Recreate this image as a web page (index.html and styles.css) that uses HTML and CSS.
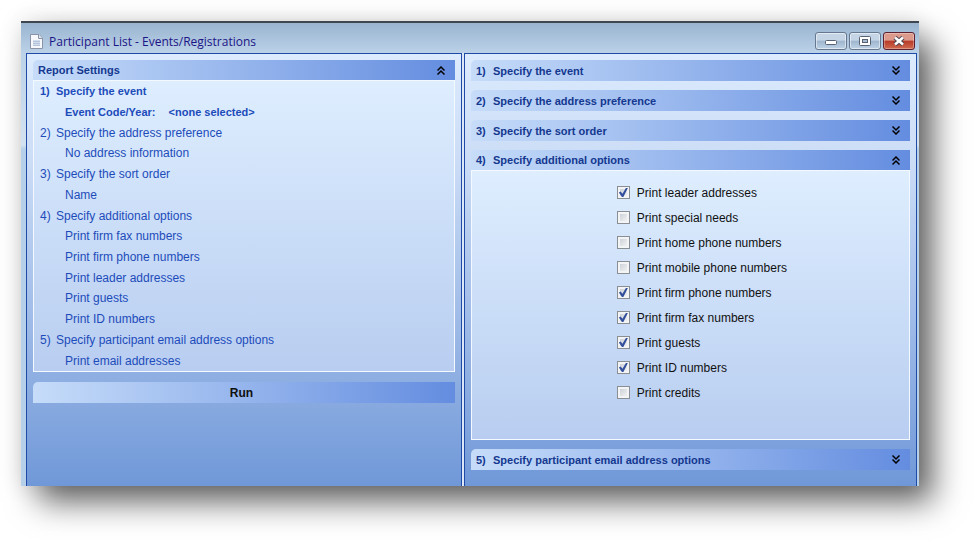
FILE: index.html
```html
<!DOCTYPE html>
<html lang="en">
<head>
    <meta charset="UTF-8">
    <meta name="viewport" content="width=device-width, initial-scale=1.0">
    <title>Participant List - Events/Registrations</title>
    <link rel="stylesheet" href="styles.css">
</head>
<body>
    <svg class="symbols" aria-hidden="true">
        <symbol id="down" viewBox="0 0 8 9">
            <path d="M0.5 0.5 L4 4 L7.5 0.5 M0.5 4.5 L4 8 L7.5 4.5" fill="none" stroke="#000" stroke-width="1.5"/>
        </symbol>
        <symbol id="up" viewBox="0 0 8 9">
            <path d="M0.5 4.5 L4 1 L7.5 4.5 M0.5 8.5 L4 5 L7.5 8.5" fill="none" stroke="#000" stroke-width="1.5"/>
        </symbol>
    </svg>

    <div class="window">
        <div class="titlebar">
            <svg width="13" height="15" viewBox="0 0 13 15" aria-hidden="true">
                <path d="M0.5 0.5 H9 L12.5 4 V14.5 H0.5 Z" fill="#f6f8fb" stroke="#8a93a8"/>
                <path d="M8.5 0.5 V4.5 H12.5" fill="#dde3ec" stroke="#8a93a8"/>
                <path d="M3 6 H10 V12 H3 Z" fill="#d3deee"/>
                <path d="M3 7.5 H10 M3 9.5 H10 M3 11.5 H10" stroke="#b4c3da"/>
            </svg>
            <h1>Participant List - Events/Registrations</h1>
            <div class="window-buttons">
                <button type="button" aria-label="Minimize">
                    <svg width="12" height="10" viewBox="0 0 12 10"><rect x="0.5" y="4.5" width="11" height="4" rx="1" fill="#fff" stroke="#566173"/></svg>
                </button>
                <button type="button" aria-label="Maximize">
                    <svg width="12" height="10" viewBox="0 0 12 10"><rect x="0.5" y="0.5" width="11" height="9" rx="1" fill="#fff" stroke="#566173"/><rect x="3.5" y="3.5" width="5" height="3" fill="#a9bbd0" stroke="#566173"/></svg>
                </button>
                <button type="button" class="close" aria-label="Close">
                    <svg width="12" height="10" viewBox="0 0 12 10"><path d="M2 1.5 L10 8.5 M10 1.5 L2 8.5" stroke="#4d4550" stroke-width="4.5"/><path d="M2 1.5 L10 8.5 M10 1.5 L2 8.5" stroke="#fff" stroke-width="2.5"/></svg>
                </button>
            </div>
        </div>

        <div class="panes">
            <div class="pane">
                <button type="button" class="bar open">Report Settings <svg class="chevron"><use href="#up"/></svg></button>
                <div class="box">
                    <ul class="summary">
                        <li class="current"><span class="num">1)</span>Specify the event</li>
                        <li class="value current">Event Code/Year: <span class="none">&lt;none selected&gt;</span></li>
                        <li><span class="num">2)</span>Specify the address preference</li>
                        <li class="value">No address information</li>
                        <li><span class="num">3)</span>Specify the sort order</li>
                        <li class="value">Name</li>
                        <li><span class="num">4)</span>Specify additional options</li>
                        <li class="value">Print firm fax numbers</li>
                        <li class="value">Print firm phone numbers</li>
                        <li class="value">Print leader addresses</li>
                        <li class="value">Print guests</li>
                        <li class="value">Print ID numbers</li>
                        <li><span class="num">5)</span>Specify participant email address options</li>
                        <li class="value">Print email addresses</li>
                    </ul>
                </div>
                <button type="button" class="bar run">Run</button>
            </div>

            <div class="pane steps">
                <button type="button" class="bar"><span class="num">1)</span>Specify the event <svg class="chevron"><use href="#down"/></svg></button>
                <button type="button" class="bar"><span class="num">2)</span>Specify the address preference <svg class="chevron"><use href="#down"/></svg></button>
                <button type="button" class="bar"><span class="num">3)</span>Specify the sort order <svg class="chevron"><use href="#down"/></svg></button>
                <div>
                    <button type="button" class="bar open"><span class="num">4)</span>Specify additional options <svg class="chevron"><use href="#up"/></svg></button>
                    <form class="box options">
                        <label><input type="checkbox" checked> Print leader addresses</label>
                        <label><input type="checkbox"> Print special needs</label>
                        <label><input type="checkbox"> Print home phone numbers</label>
                        <label><input type="checkbox"> Print mobile phone numbers</label>
                        <label><input type="checkbox" checked> Print firm phone numbers</label>
                        <label><input type="checkbox" checked> Print firm fax numbers</label>
                        <label><input type="checkbox" checked> Print guests</label>
                        <label><input type="checkbox" checked> Print ID numbers</label>
                        <label><input type="checkbox"> Print credits</label>
                    </form>
                </div>
                <button type="button" class="bar"><span class="num">5)</span>Specify participant email address options <svg class="chevron"><use href="#down"/></svg></button>
            </div>
        </div>
    </div>
</body>
</html>
```
FILE: styles.css
```css
* {
    box-sizing: border-box;
}

body {
    margin: 0;
    padding: 21px 55px 55px 21px;
    background-color: #fff;
    font-family: "Liberation Sans", Arial, sans-serif;
    font-size: 12px;
}

button {
    font: inherit;
    cursor: pointer;
}

.symbols {
    display: none;
}

.window {
    padding: 0 2px 0 5px;
    border-top: 2px solid #3f4650;
    background: linear-gradient(#9ab4d0, #bbd2e8 30px, #d3e2f0 122px, #b5d0e8 126px);
    box-shadow: 16px 18px 30px -2px rgba(0, 0, 0, 0.6), 0 0 22px rgba(0, 0, 0, 0.12);
}

/* title bar */
.titlebar {
    display: flex;
    align-items: center;
    height: 30px;
    padding: 6px 2px 0 4px;
}

.titlebar h1 {
    flex: 1;
    margin: 0 0 0 6px;
    font: 12px "Open Sans", sans-serif;
    color: #1c1486;
}

.window-buttons {
    display: flex;
    gap: 2px;
}

.window-buttons button {
    display: flex;
    align-items: center;
    justify-content: center;
    width: 32px;
    height: 18px;
    padding: 0;
    border: 1px solid #66788f;
    border-radius: 3px;
    background: linear-gradient(#c5d5e6 45%, #9db5ce 50%, #bfd3e6);
    box-shadow: inset 0 0 0 1px rgba(255, 255, 255, 0.5);
}

.window-buttons .close {
    border-color: #5c2030;
    background: linear-gradient(#dc9a8c 45%, #b93a28 50%, #cf6a50);
    box-shadow: inset 0 0 0 1px rgba(255, 255, 255, 0.3);
}

/* panes */
.panes {
    display: grid;
    grid-template-columns: 436fr 453fr;
    gap: 2px;
    background-color: #dce8f8;
}

.pane {
    min-height: 433px;
    padding: 6px 6px 15px;
    border: solid #1f4ba6;
    border-width: 1px 1px 0;
    background: linear-gradient(#dcebfd, #cbdcf6 25%, #7098d8);
}

.steps {
    display: flex;
    flex-direction: column;
    gap: 9px;
}

.bar {
    display: flex;
    align-items: center;
    width: 100%;
    height: 21px;
    padding: 0 10px 0 5px;
    border: none;
    border-radius: 5px 0 0 0;
    background: linear-gradient(90deg, #c6dcf9, #648de0);
    font-size: 11px;
    font-weight: bold;
    color: #14388f;
}

.bar.open {
    height: 20px;
}

.bar .num {
    width: 17px;
    text-align: left;
}

.chevron {
    width: 8px;
    height: 9px;
    margin-left: auto;
}

.run {
    justify-content: center;
    margin-top: 10px;
    font-size: 12px;
    color: #101010;
}

.box {
    border: 1px solid #f4f9ff;
    background: linear-gradient(#deeeff, #b8cdf0);
}

.summary {
    display: grid;
    grid-auto-rows: 1fr;
    align-items: center;
    height: 290px;
    margin: 0;
    padding: 0 6px;
    list-style: none;
    color: #1d4cba;
}

.summary .num {
    display: inline-block;
    width: 16px;
}

.summary .value {
    padding-left: 25px;
}

.summary .current {
    font-size: 11px;
    font-weight: bold;
}

.none {
    margin-left: 10px;
}

.options {
    display: flex;
    flex-direction: column;
    padding: 9px 0 34px 33%;
}

.options label {
    display: flex;
    align-items: center;
    height: 25px;
    color: #111;
}

.options input {
    appearance: none;
    width: 13px;
    height: 13px;
    margin: 0 7px 0 0;
    border: 1px solid #8b8f94;
    background: linear-gradient(135deg, #c4c9d0, #fafafa);
    box-shadow: inset 0 0 0 2px #f2f4f6;
}

.options input:checked::before {
    content: "";
    display: block;
    width: 9px;
    height: 9px;
    margin: 1px;
    background-color: #33509c;
    clip-path: polygon(0 50%, 20% 38%, 40% 65%, 78% 0, 100% 0, 50% 100%, 34% 100%);
}
```
